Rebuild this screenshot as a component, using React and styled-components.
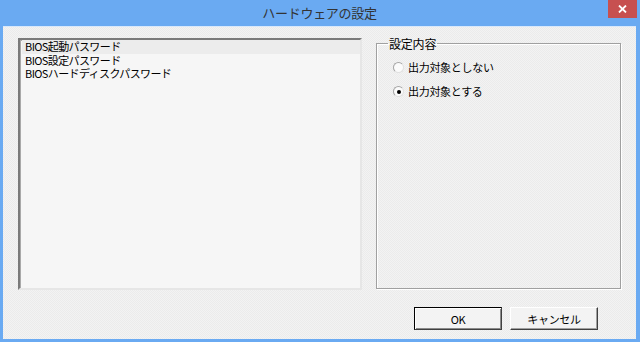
import styled, { createGlobalStyle } from "styled-components";

const GlobalStyle = createGlobalStyle`
	html, body {
		margin: 0;
		padding: 0;
		background: #6aaaf2;
	}

	body {
		font-family: "Noto Sans CJK JP", "Liberation Sans", sans-serif;
		font-size: 12px;
		color: #000000;
	}
`;

const Window = styled.div`
	width: 640px;
	height: 342px;
	display: flex;
	flex-direction: column;
	background: #6aaaf2;
	box-sizing: border-box;
	padding: 0 4px 3px 3px;
	overflow: hidden;
`;

const TitleBar = styled.div`
	height: 26px;
	flex: 0 0 26px;
	position: relative;
	display: flex;
	align-items: center;
	justify-content: center;

	.title {
		font-size: 13px;
		color: #333333;
		letter-spacing: -0.3px;
		margin-top: -2px;
	}
`;

const CloseButton = styled.div`
	position: absolute;
	top: 0;
	right: -1px;
	width: 29px;
	height: 18px;
	background: #c75050;
	display: flex;
	align-items: center;
	justify-content: center;
`;

const Body = styled.div`
	flex: 1 1 auto;
	display: flex;
	flex-direction: column;
	padding: 11px 15px 0 15px;
	box-sizing: border-box;
	background: repeating-conic-gradient(#f3f3f3 0 25%, #ebebeb 0 50%) 0 0 / 2px 2px;
	border-top: 1px solid #d8e8fb;
`;

const Main = styled.div`
	display: flex;
	gap: 14px;
	height: 252px;
`;

const ListBox = styled.div`
	width: 344px;
	box-sizing: border-box;
	background: #f6f6f6;
	border-style: solid;
	border-width: 2px;
	border-color: #7a7a7a #e6e6e6 #e6e6e6 #7a7a7a;
	box-shadow: inset 1px 1px 0 #a9a9a9;
	padding: 0 0 0 2px;
	display: flex;
	flex-direction: column;
`;

const ListItem = styled.div`
	height: 13.5px;
	line-height: 13.5px;
	padding-left: 3px;
	font-size: 11px;
	letter-spacing: -0.6px;
	white-space: nowrap;
	background: ${props => props.selected ? "#ececec" : "transparent"};
`;

const GroupBox = styled.fieldset`
	flex: 1 1 auto;
	margin: 0;
	padding: 11px 0 0 16px;
	border: 1px solid #a0a0a0;
	box-shadow: 1px 1px 0 #ffffff, inset 1px 1px 0 #ffffff;
	box-sizing: border-box;
	display: flex;
	flex-direction: column;
	gap: 11px;
	height: 252px;
	margin-top: -1px;

	legend {
		padding: 0 1px;
		margin-left: -5px;
		line-height: 13px;
		font-size: 12px;
		letter-spacing: -0.2px;
	}
`;

const RadioRow = styled.label`
	display: flex;
	align-items: center;
	gap: 4px;
	height: 13px;
	line-height: 13px;
	font-size: 11px;
	letter-spacing: -0.3px;
`;

const RadioCircle = styled.span`
	width: 11px;
	height: 11px;
	flex: 0 0 11px;
	box-sizing: border-box;
	border-radius: 50%;
	border: 1px solid #a5a5a5;
	border-right-color: #e0e0e0;
	border-bottom-color: #e0e0e0;
	background: #fbfbfb;
	display: flex;
	align-items: center;
	justify-content: center;

	&::after {
		content: "";
		width: 4px;
		height: 4px;
		border-radius: 50%;
		background: #000000;
		display: ${props => props.checked ? "block" : "none"};
	}
`;

const ButtonRow = styled.div`
	display: flex;
	justify-content: flex-end;
	gap: 8px;
	padding: 17px 23px 0 0;
`;

const Button = styled.div`
	width: 88px;
	height: 23px;
	box-sizing: border-box;
	display: flex;
	align-items: center;
	justify-content: center;
	background: #f3f3f3;
	border: 1px solid ${props => props.isDefault ? "#000000" : "#ffffff"};
	border-right-color: #404040;
	border-bottom-color: #404040;
	box-shadow: ${props => props.isDefault
		? "inset 1px 1px 0 #ffffff, inset -1px -1px 0 #8a8a8a"
		: "inset -1px -1px 0 #a0a0a0"};
	font-size: 11px;
	letter-spacing: -0.3px;
`;

const App = () => {
	return (
		<>
			<GlobalStyle/>
			<Window>
				<TitleBar>
					<span className={"title"}>ハードウェアの設定</span>
					<CloseButton>
						<svg width="9" height="8" viewBox="0 0 9 8">
							<path d="M1 0.5 L8 7.5 M8 0.5 L1 7.5" stroke="#ffffff" strokeWidth="1.8"/>
						</svg>
					</CloseButton>
				</TitleBar>
				<Body>
					<Main>
						<ListBox>
							<ListItem selected>BIOS起動パスワード</ListItem>
							<ListItem>BIOS設定パスワード</ListItem>
							<ListItem>BIOSハードディスクパスワード</ListItem>
						</ListBox>
						<GroupBox>
							<legend>設定内容</legend>
							<RadioRow><RadioCircle/>出力対象としない</RadioRow>
							<RadioRow><RadioCircle checked/>出力対象とする</RadioRow>
						</GroupBox>
					</Main>
					<ButtonRow>
						<Button isDefault>OK</Button>
						<Button>キャンセル</Button>
					</ButtonRow>
				</Body>
			</Window>
		</>
	);
};

export default App;
